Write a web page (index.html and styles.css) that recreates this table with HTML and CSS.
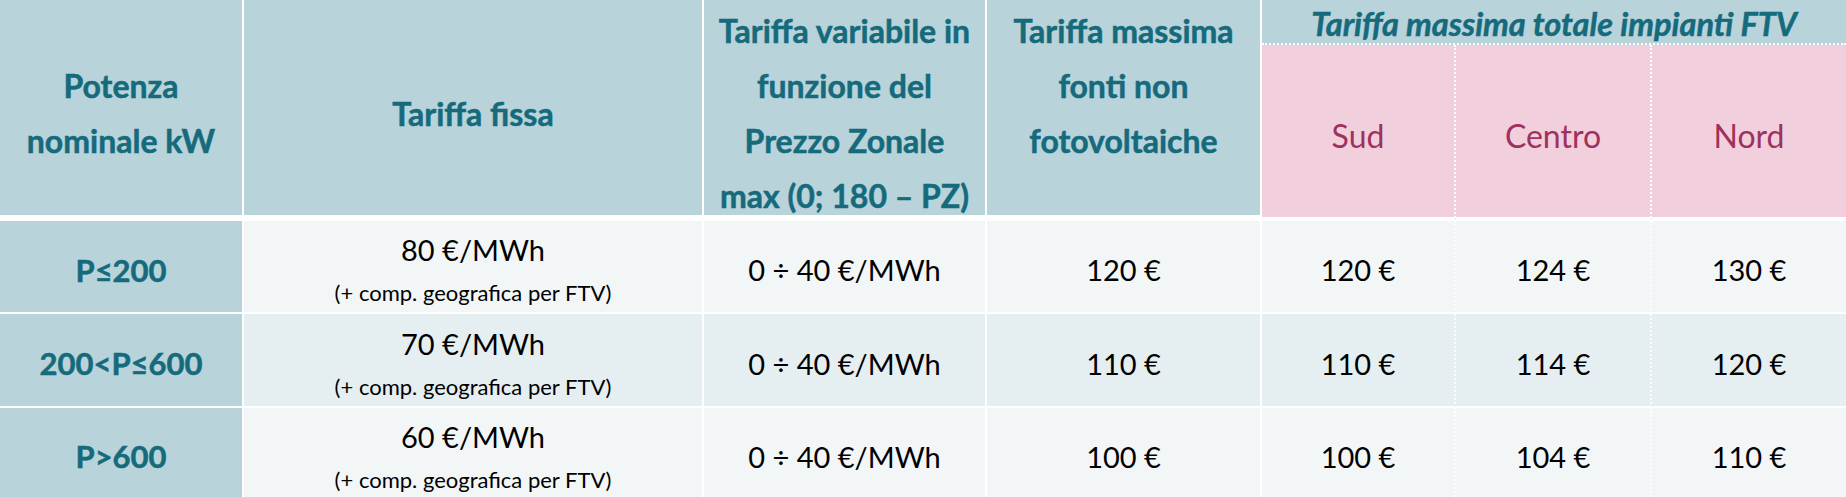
FILE: index.html
```html
<!DOCTYPE html>
<html lang="it">
<head>
<meta charset="utf-8">
<title>Tariffe</title>
<link rel="stylesheet" href="styles.css">
</head>
<body>
<div class="table">
  <div class="hcell c1 mid"><span>Potenza</span><span>nominale kW</span></div>
  <div class="hcell c2 mid"><span>Tariffa fissa</span></div>
  <div class="hcell c3 mid"><span>Tariffa variabile in</span><span>funzione del</span><span>Prezzo Zonale</span><span>max (0; 180 – PZ)</span></div>
  <div class="hcell c4 top"><span>Tariffa massima</span><span>fonti non</span><span>fotovoltaiche</span></div>
  <div class="htitle">Tariffa massima totale impianti FTV</div>
  <div class="zone z1">Sud</div>
  <div class="zone z2">Centro</div>
  <div class="zone z3">Nord</div>

  <div class="row odd">
    <div class="cell first">P≤200</div>
    <div class="cell fixed"><span class="big">80 €/MWh</span><span class="small">(+ comp. geografica per FTV)</span></div>
    <div class="cell">0 ÷ 40 €/MWh</div>
    <div class="cell">120 €</div>
    <div class="cell sub">120 €</div>
    <div class="cell sub">124 €</div>
    <div class="cell last">130 €</div>
  </div>
  <div class="row even">
    <div class="cell first">200&lt;P≤600</div>
    <div class="cell fixed"><span class="big">70 €/MWh</span><span class="small">(+ comp. geografica per FTV)</span></div>
    <div class="cell">0 ÷ 40 €/MWh</div>
    <div class="cell">110 €</div>
    <div class="cell sub">110 €</div>
    <div class="cell sub">114 €</div>
    <div class="cell last">120 €</div>
  </div>
  <div class="row odd">
    <div class="cell first">P&gt;600</div>
    <div class="cell fixed"><span class="big">60 €/MWh</span><span class="small">(+ comp. geografica per FTV)</span></div>
    <div class="cell">0 ÷ 40 €/MWh</div>
    <div class="cell">100 €</div>
    <div class="cell sub">100 €</div>
    <div class="cell sub">104 €</div>
    <div class="cell last">110 €</div>
  </div>
</div>
</body>
</html>
```
FILE: styles.css
```css
html, body {
  margin: 0;
  padding: 0;
  background: #ffffff;
  overflow: hidden;
}
body {
  width: 1846px;
  height: 497px;
  font-family: Lato, "Liberation Sans", sans-serif;
}
.table {
  display: grid;
  grid-template-columns: 244px 460px 283px 275px 194px 196px 194px;
  grid-template-rows: 45px 176px 93px 94px 92px;
}
.hcell {
  grid-row: 1 / 3;
  background: #b8d3da;
  border-right: 2px solid #ffffff;
  border-bottom: 6px solid #ffffff;
  color: #156a7c;
  font-weight: 700;
  -webkit-text-stroke: 0.5px #156a7c;
  font-size: 32px;
  line-height: 55px;
  display: flex;
  flex-direction: column;
  align-items: center;
  text-align: center;
  white-space: nowrap;
  overflow: visible;
}
.hcell.mid {
  justify-content: center;
  padding-top: 11px;
}
.hcell.top {
  justify-content: flex-start;
  padding-top: 3px;
}
.c1 { grid-column: 1; }
.c2 { grid-column: 2; }
.c3 { grid-column: 3; }
.c4 { grid-column: 4; }
.htitle {
  grid-column: 5 / 8;
  grid-row: 1;
  background: #b8d3da;
  border-bottom: 2px dotted #ffffff;
  color: #156a7c;
  font-weight: 700;
  -webkit-text-stroke: 0.5px #156a7c;
  font-style: italic;
  font-size: 32.5px;
  line-height: 48px;
  text-align: center;
  white-space: nowrap;
  overflow: hidden;
}
.zone {
  grid-row: 2;
  background: #f2cfdc;
  border-bottom: 4px solid #ffffff;
  color: #a0315e;
  font-size: 32px;
  display: flex;
  align-items: center;
  justify-content: center;
  padding-top: 9px;
}
.z1 { grid-column: 5; border-right: 2px dotted #ffffff; }
.z2 { grid-column: 6; border-right: 2px dotted #ffffff; }
.z3 { grid-column: 7; }
.row {
  display: contents;
}
.cell {
  border-right: 2px solid #ffffff;
  border-bottom: 2px solid #ffffff;
  display: flex;
  flex-direction: column;
  align-items: center;
  justify-content: center;
  font-size: 29px;
  color: #000000;
  white-space: nowrap;
  padding-top: 6px;
}
.odd .cell { background: #f2f6f7; }
.even .cell { background: #e5eef1; }
.row .cell.first {
  background: #b8d3da;
  color: #156a7c;
  font-weight: 700;
  -webkit-text-stroke: 0.5px #156a7c;
  font-size: 31px;
}
.cell.sub {
  border-right: 2px dotted rgba(255, 255, 255, 0.8);
}
.cell.last {
  border-right: none;
}
.cell.fixed {
  padding-top: 13px;
}
.big {
  font-size: 29px;
  line-height: 40px;
}
.small {
  font-size: 22px;
  line-height: 46px;
}
```
